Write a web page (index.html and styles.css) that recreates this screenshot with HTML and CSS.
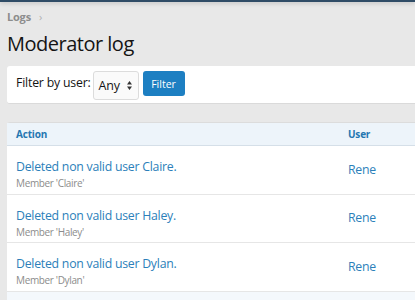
FILE: index.html
```html
<!DOCTYPE html>
<html lang="en">
<head>
<meta charset="utf-8">
<title>Moderator log</title>
<link rel="stylesheet" href="styles.css">
</head>
<body>
<div class="topbar"></div>
<main class="page">
  <nav class="crumbs"><a href="#">Logs</a><span class="sep">›</span></nav>
  <h1 class="title">Moderator log</h1>
  <form class="filter">
    <label class="filter-label">Filter by user:</label>
    <div class="select">
      <span>Any</span>
      <svg class="arrows" width="5" height="9" viewBox="0 0 5 9"><path d="M2.5 0 L5 3.5 H0 Z M0 5.5 H5 L2.5 9 Z" fill="#333"/></svg>
    </div>
    <button type="button" class="btn">Filter</button>
  </form>
  <section class="block">
    <div class="row head">
      <div class="cell">Action</div>
      <div class="cell">User</div>
    </div>
    <div class="row">
      <div class="cell"><a class="link" href="#">Deleted non valid user Claire.</a><div class="hint">Member 'Claire'</div></div>
      <div class="cell mid"><a class="user" href="#">Rene</a></div>
    </div>
    <div class="row">
      <div class="cell"><a class="link" href="#">Deleted non valid user Haley.</a><div class="hint">Member 'Haley'</div></div>
      <div class="cell mid"><a class="user" href="#">Rene</a></div>
    </div>
    <div class="row">
      <div class="cell"><a class="link" href="#">Deleted non valid user Dylan.</a><div class="hint">Member 'Dylan'</div></div>
      <div class="cell mid"><a class="user" href="#">Rene</a></div>
    </div>
    <div class="row foot"></div>
  </section>
</main>
</body>
</html>
```
FILE: styles.css
```css
html, body {
  margin: 0;
  padding: 0;
  overflow: hidden;
  height: 300px;
}
body {
  background: #e8e8e8;
  font-family: "Open Sans", sans-serif;
  color: #141414;
}
.topbar {
  height: 2px;
  background: #2f4c66;
  box-shadow: 0 1px 4px rgba(0,0,0,0.25);
}
.page {
  padding: 0 0 0 7px;
}
.crumbs {
  padding-top: 7px;
  font-size: 11px;
  line-height: 16px;
  font-weight: 700;
  letter-spacing: -0.2px;
}
.crumbs a {
  color: #8d8d8d;
  text-decoration: none;
}
.crumbs .sep {
  color: #b0b0b0;
  font-weight: 400;
  margin-left: 8px;
}
.title {
  margin: 5px 0 0;
  font-size: 20px;
  font-weight: 400;
  line-height: 28px;
  letter-spacing: -0.5px;
  color: #141414;
}
.filter {
  margin-top: 8px;
  background: #fff;
  border-radius: 3px 0 0 3px;
  border-bottom: 1px solid #dadada;
  padding: 5px 9px 3px;
  display: flex;
  align-items: flex-start;
}
.filter-label {
  font-size: 12.3px;
  line-height: 23px;
  letter-spacing: -0.2px;
  margin-right: 2px;
}
.select {
  box-sizing: border-box;
  width: 46px;
  height: 29px;
  border: 1px solid #dcdcdc;
  border-radius: 3px;
  background: #fafafa;
  display: flex;
  align-items: center;
  justify-content: space-between;
  padding: 0 6px 0 5px;
  font-size: 12.5px;
  letter-spacing: -0.2px;
}
.arrows {
  display: block;
}
.btn {
  margin-left: 4px;
  width: 42px;
  height: 25px;
  border: 0;
  border-radius: 3px;
  background: #1d7fc2;
  color: #fff;
  font-family: inherit;
  font-size: 10.5px;
  padding: 0;
}
.block {
  margin-top: 18px;
  background: #fff;
  border-top: 1px solid #dcdcdc;
  border-radius: 3px 0 0 0;
}
.row {
  display: grid;
  grid-template-columns: 332px 1fr;
  border-bottom: 1px solid #e6e6e6;
  height: 47.5px;
}
.row.head {
  background: #edf4fa;
  height: 22px;
  border-bottom: 1px solid #d5dfe8;
  font-size: 10px;
  font-weight: 700;
  letter-spacing: -0.2px;
  color: #2577b1;
  align-items: center;
}
.row.foot {
  background: #f4f8fc;
  border-bottom: 0;
  height: 10px;
}
.cell {
  padding: 0 9px;
}
.row:not(.head) .cell {
  padding-top: 8px;
}
.row:not(.head) .cell.mid {
  padding-top: 0;
  display: flex;
  align-items: center;
}
.link, .user {
  color: #2c7fba;
  text-decoration: none;
  font-size: 12.3px;
  line-height: 18px;
  letter-spacing: -0.25px;
}
.hint {
  font-size: 10px;
  line-height: 14px;
  letter-spacing: -0.35px;
  color: #8c8c8c;
}
```
